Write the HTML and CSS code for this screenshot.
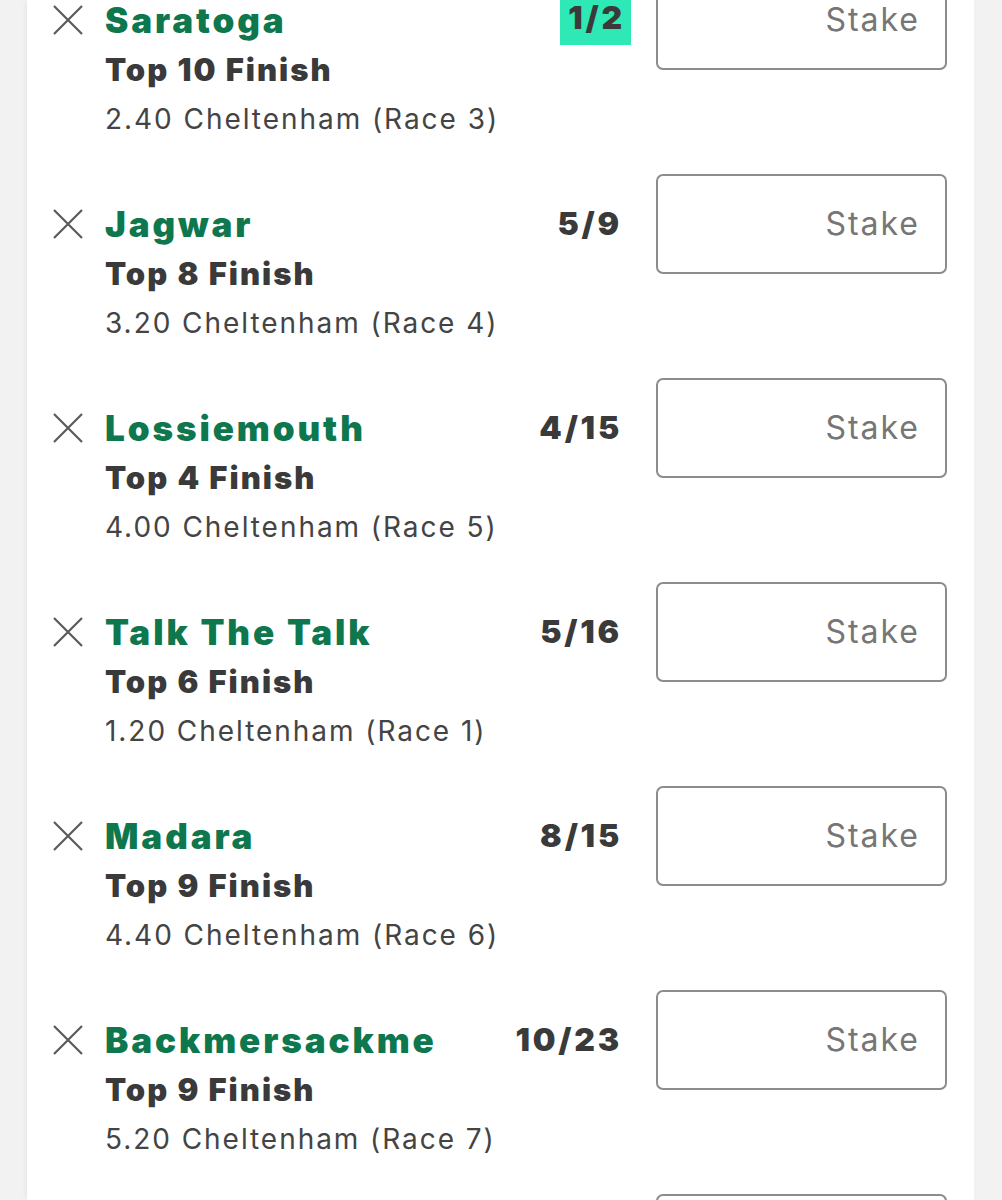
FILE: index.html
```html
<!DOCTYPE html>
<html>
<head>
<meta charset="utf-8">
<link rel="stylesheet" href="styles.css">
</head>
<body>
<div class="panel">
  <div class="list">
    <div class="row">
      <span class="remove"><svg viewBox="0 0 30 30" width="30" height="30"><path d="M1 1 L29 29 M29 1 L1 29" stroke="#5a5a5a" stroke-width="2.2" fill="none"/></svg></span>
      <div class="info">
        <div class="name">Saratoga</div>
        <div class="market">Top 10 Finish</div>
        <div class="event">2.40 Cheltenham (Race 3)</div>
      </div>
      <div class="odds"><span class="hl">1/2</span></div>
      <div class="stake">Stake</div>
    </div>
    <div class="row">
      <span class="remove"><svg viewBox="0 0 30 30" width="30" height="30"><path d="M1 1 L29 29 M29 1 L1 29" stroke="#5a5a5a" stroke-width="2.2" fill="none"/></svg></span>
      <div class="info">
        <div class="name">Jagwar</div>
        <div class="market">Top 8 Finish</div>
        <div class="event">3.20 Cheltenham (Race 4)</div>
      </div>
      <div class="odds">5/9</div>
      <div class="stake">Stake</div>
    </div>
    <div class="row">
      <span class="remove"><svg viewBox="0 0 30 30" width="30" height="30"><path d="M1 1 L29 29 M29 1 L1 29" stroke="#5a5a5a" stroke-width="2.2" fill="none"/></svg></span>
      <div class="info">
        <div class="name">Lossiemouth</div>
        <div class="market">Top 4 Finish</div>
        <div class="event">4.00 Cheltenham (Race 5)</div>
      </div>
      <div class="odds">4/15</div>
      <div class="stake">Stake</div>
    </div>
    <div class="row">
      <span class="remove"><svg viewBox="0 0 30 30" width="30" height="30"><path d="M1 1 L29 29 M29 1 L1 29" stroke="#5a5a5a" stroke-width="2.2" fill="none"/></svg></span>
      <div class="info">
        <div class="name">Talk The Talk</div>
        <div class="market">Top 6 Finish</div>
        <div class="event">1.20 Cheltenham (Race 1)</div>
      </div>
      <div class="odds">5/16</div>
      <div class="stake">Stake</div>
    </div>
    <div class="row">
      <span class="remove"><svg viewBox="0 0 30 30" width="30" height="30"><path d="M1 1 L29 29 M29 1 L1 29" stroke="#5a5a5a" stroke-width="2.2" fill="none"/></svg></span>
      <div class="info">
        <div class="name">Madara</div>
        <div class="market">Top 9 Finish</div>
        <div class="event">4.40 Cheltenham (Race 6)</div>
      </div>
      <div class="odds">8/15</div>
      <div class="stake">Stake</div>
    </div>
    <div class="row">
      <span class="remove"><svg viewBox="0 0 30 30" width="30" height="30"><path d="M1 1 L29 29 M29 1 L1 29" stroke="#5a5a5a" stroke-width="2.2" fill="none"/></svg></span>
      <div class="info">
        <div class="name">Backmersackme</div>
        <div class="market">Top 9 Finish</div>
        <div class="event">5.20 Cheltenham (Race 7)</div>
      </div>
      <div class="odds">10/23</div>
      <div class="stake">Stake</div>
    </div>
    <div class="row">
      <span class="remove"></span>
      <div class="info"></div>
      <div class="odds"></div>
      <div class="stake"></div>
    </div>
  </div>
</div>
</body>
</html>
```

FILE: styles.css
```css
html, body {
  margin: 0;
  padding: 0;
  background: #f2f2f2;
  height: 1200px;
  overflow: hidden;
}
.panel {
  margin-left: 27px;
  width: 947px;
  height: 1200px;
  background: #fff;
  box-shadow: -4px 0 3px -2px #e8e8e8;
  overflow: hidden;
  font-family: Inter, "Liberation Sans", sans-serif;
}
.list {
  margin-top: -30px;
  padding-left: 27px;
  padding-right: 27px;
}
.row {
  display: grid;
  grid-template-columns: 52px 1fr auto 291px;
  align-items: start;
  height: 204px;
}
.remove {
  display: block;
  width: 30px;
  height: 30px;
  margin-top: 35px;
  margin-left: -1px;
}
.remove svg { display: block; }
.info {
  padding-top: 25px;
  margin-left: -1px;
}
.name {
  color: #0e774d;
  font-weight: 900;
  font-size: 35px;
  line-height: 50px;
  letter-spacing: 2.9px;
}
.market {
  color: #3a3a3a;
  font-weight: 900;
  font-size: 31px;
  line-height: 50px;
  letter-spacing: 2px;
}
.event {
  color: #444;
  font-weight: 400;
  font-size: 28px;
  line-height: 48px;
  letter-spacing: 1.95px;
}
.odds {
  margin-top: 25px;
  margin-right: 34px;
  color: #3a3a3a;
  font-weight: 900;
  font-size: 32px;
  line-height: 50px;
  letter-spacing: 2.8px;
  text-align: right;
}
.hl {
  display: inline-block;
  background: #2ee8b6;
  padding: 0 6px 4px 8px;
  margin-right: -9px;
  line-height: 46px;
  vertical-align: top;
}
.stake {
  box-sizing: border-box;
  height: 100px;
  border: 2px solid #8c8c8c;
  border-radius: 7px;
  color: #767676;
  font-size: 32px;
  line-height: 96px;
  letter-spacing: 2px;
  text-align: right;
  padding-right: 25px;
}
```
